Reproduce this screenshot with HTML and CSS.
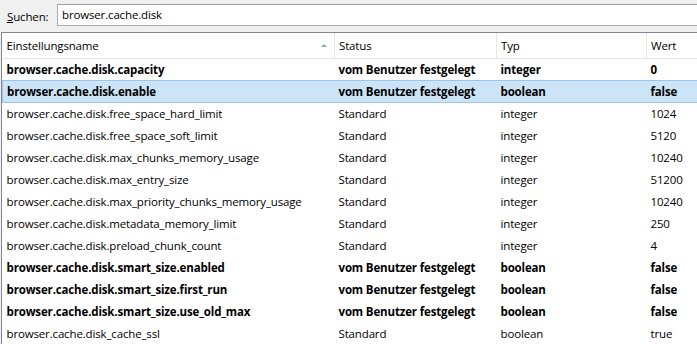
FILE: index.html
```html
<!DOCTYPE html>
<html lang="de">
<head>
    <meta charset="UTF-8">
    <title>about:config</title>
    <link rel="stylesheet" href="styles.css">
</head>
<body>

    <div class="search-bar">
        <label for="search"><u>S</u>uchen:</label>
        <div class="search-input" id="search">browser.cache.disk</div>
    </div>

    <div class="prefs">
        <table class="pref-table">
            <colgroup>
                <col class="col-name">
                <col class="col-status">
                <col class="col-type">
                <col class="col-value">
            </colgroup>
            <thead>
                <tr>
                    <th>Einstellungsname <span class="sort-arrow"></span></th>
                    <th>Status</th>
                    <th>Typ</th>
                    <th>Wert</th>
                </tr>
            </thead>
            <tbody>
                <tr class="user"><td>browser.cache.disk.capacity</td><td>vom Benutzer festgelegt</td><td>integer</td><td>0</td></tr>
                <tr class="user selected"><td>browser.cache.disk.enable</td><td>vom Benutzer festgelegt</td><td>boolean</td><td>false</td></tr>
                <tr><td>browser.cache.disk.free_space_hard_limit</td><td>Standard</td><td>integer</td><td>1024</td></tr>
                <tr><td>browser.cache.disk.free_space_soft_limit</td><td>Standard</td><td>integer</td><td>5120</td></tr>
                <tr><td>browser.cache.disk.max_chunks_memory_usage</td><td>Standard</td><td>integer</td><td>10240</td></tr>
                <tr><td>browser.cache.disk.max_entry_size</td><td>Standard</td><td>integer</td><td>51200</td></tr>
                <tr><td>browser.cache.disk.max_priority_chunks_memory_usage</td><td>Standard</td><td>integer</td><td>10240</td></tr>
                <tr><td>browser.cache.disk.metadata_memory_limit</td><td>Standard</td><td>integer</td><td>250</td></tr>
                <tr><td>browser.cache.disk.preload_chunk_count</td><td>Standard</td><td>integer</td><td>4</td></tr>
                <tr class="user"><td>browser.cache.disk.smart_size.enabled</td><td>vom Benutzer festgelegt</td><td>boolean</td><td>false</td></tr>
                <tr class="user"><td>browser.cache.disk.smart_size.first_run</td><td>vom Benutzer festgelegt</td><td>boolean</td><td>false</td></tr>
                <tr class="user"><td>browser.cache.disk.smart_size.use_old_max</td><td>vom Benutzer festgelegt</td><td>boolean</td><td>false</td></tr>
                <tr><td>browser.cache.disk_cache_ssl</td><td>Standard</td><td>boolean</td><td>true</td></tr>
            </tbody>
        </table>
    </div>

</body>
</html>
```

FILE: styles.css
```css
body {
    margin: 0;
    padding: 0;
    background-color: #f0f0f0;
    font-family: "Open Sans", "Noto Sans", sans-serif;
    font-size: 11.5px;
    letter-spacing: -0.15px;
    color: #000;
    width: 697px;
    height: 344px;
    overflow: hidden;
}

/* Search bar */
.search-bar {
    display: flex;
    align-items: center;
    height: 32px;
    padding: 0 0 0 7px;
    box-sizing: border-box;
}

.search-bar label {
    width: 50px;
}

.search-bar label u {
    text-decoration: underline;
}

.search-input {
    flex: 1;
    height: 22px;
    box-sizing: border-box;
    background: #fff;
    border: 1px solid #abadb3;
    border-top-color: #a0a0a0;
    border-right: none;
    padding: 0 0 0 4px;
    line-height: 20px;
    margin-top: -3px;
}

/* Table */
.prefs {
    margin-left: 1px;
    background: #fff;
    border-top: 1px solid #828790;
    border-left: 1px solid #828790;
    height: 312px;
    overflow: hidden;
}

.pref-table {
    border-collapse: collapse;
    table-layout: fixed;
    width: 740px;
}

.col-name { width: 332px; }
.col-status { width: 162px; }
.col-type { width: 150px; }
.col-value { width: 96px; }

.pref-table th {
    font-weight: normal;
    text-align: left;
    height: 25px;
    padding: 0 0 0 4px;
    border-right: 1px solid #e5e5e5;
    border-bottom: 1px solid #e5e5e5;
    position: relative;
}

.sort-arrow {
    position: absolute;
    right: 7px;
    top: 11px;
    width: 0;
    height: 0;
    border-left: 3px solid transparent;
    border-right: 3px solid transparent;
    border-bottom: 3px solid #8fa6c0;
}

.pref-table td {
    height: 22px;
    padding: 0 0 0 4px;
    white-space: nowrap;
    overflow: hidden;
    box-sizing: border-box;
}

.pref-table tr.user td {
    font-weight: bold;
}

.pref-table tr.selected td {
    background: #cce4f7;
    border-top: 1px solid #99c6ec;
    border-bottom: 1px solid #99c6ec;
}

.pref-table tr.selected td:first-child {
    border-left: 1px solid #99c6ec;
}
```
